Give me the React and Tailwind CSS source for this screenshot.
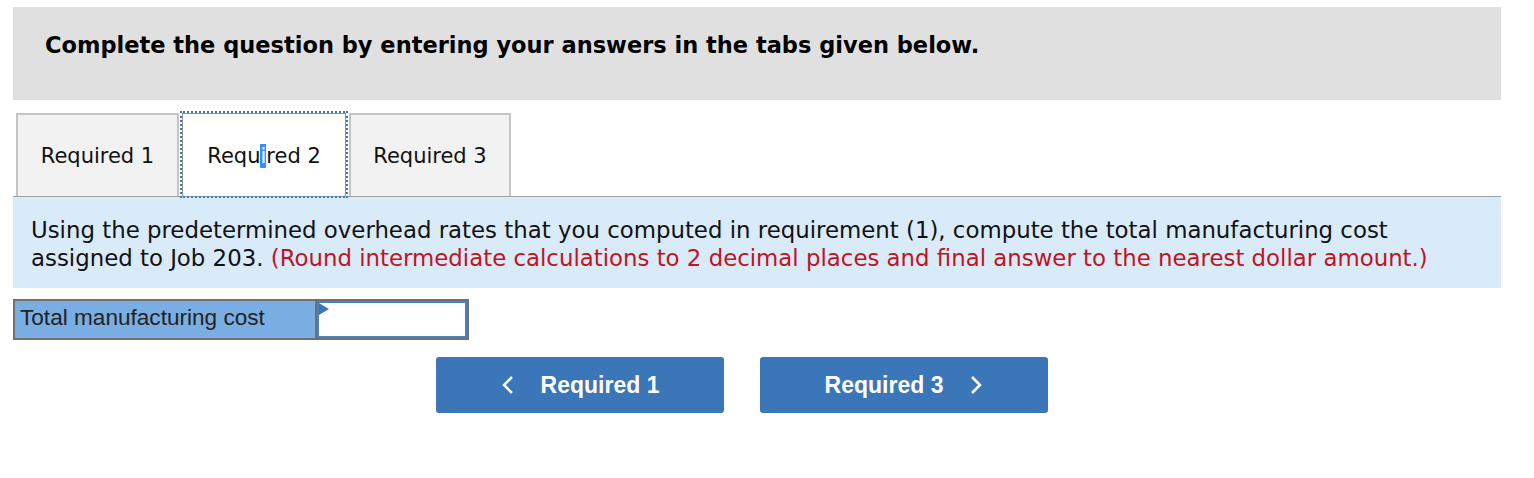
import React from "react";

const verdana = { fontFamily: '"DejaVu Sans", Verdana, sans-serif' };

export default function App() {
  return (
    <div className="w-[1534px] h-[478px] bg-white pl-[13px] pt-[7px]" style={verdana}>
      <div className="w-[1488px]">
        <div className="h-[93px] bg-[#e0e0e0] pl-[32px] pt-[24px]">
          <p className="text-[22.5px] font-bold text-black leading-[28px]">
            Complete the question by entering your answers in the tabs given below.
          </p>
        </div>

        <div className="mt-[13px] flex items-end h-[84px] border-b border-[#a0a0a0] pl-[3px]">
          <div className="w-[163px] h-[83px] pt-[3px] bg-[#f2f2f2] border-2 border-b-0 border-[#c4c4c4] flex items-center justify-center text-[21px] text-[#111]">
            Required 1
          </div>
          <div className="ml-[3px] w-[164px] h-[83px] pt-[3px] bg-white border border-b-0 border-[#909090] outline-2 outline-dotted outline-[#3a76b8] flex items-center justify-center text-[21px] text-[#111] relative">
            <span>
              Requ<span className="bg-[#3390ff] text-white">i</span>red 2
            </span>
          </div>
          <div className="ml-[3px] w-[162px] h-[83px] pt-[3px] bg-[#f2f2f2] border-2 border-b-0 border-[#c4c4c4] flex items-center justify-center text-[21px] text-[#111]">
            Required 3
          </div>
        </div>

        <div className="h-[91px] bg-[#d9ebf9] pl-[18px] pr-[22px] pt-[19px] text-[22.85px] leading-[28px] text-[#111]">
          Using the predetermined overhead rates that you computed in requirement (1), compute the total manufacturing cost assigned to Job 203.{" "}
          <span className="text-[#c0141e]">
            (Round intermediate calculations to 2 decimal places and final answer to the nearest dollar amount.)
          </span>
        </div>

        <div className="mt-[11px] flex h-[41px]">
          <div className="w-[302px] h-full pb-[3px] bg-[#7aaee3] border-2 border-[#707070] border-r-0 flex items-center pl-[5px] text-[22.6px] text-[#222] [font-family:'Liberation_Sans',Arial,sans-serif]">
            Total manufacturing cost
          </div>
          <div className="relative w-[154px] h-full border-2 border-[#707070]">
            <div className="w-full h-full border-2 border-[#4a7fc0] bg-white"></div>
            <div className="absolute left-[2px] top-[2px] w-0 h-0 border-t-[6px] border-b-[6px] border-l-[10px] border-t-transparent border-b-transparent border-l-[#3a76b8]"></div>
          </div>
        </div>

        <div className="mt-[17px] flex pl-[423px] gap-[36px] [font-family:'Liberation_Sans',Arial,sans-serif]">
          <button className="w-[288px] h-[56px] bg-[#3a76b8] rounded-[3px] flex items-center justify-center text-white text-[23px] font-bold">
            <svg width="14" height="20" viewBox="0 0 14 20" className="mr-[26px]">
              <path d="M11 2 L3 10 L11 18" fill="none" stroke="white" strokeWidth="2.5" />
            </svg>
            Required 1
          </button>
          <button className="w-[288px] h-[56px] bg-[#3a76b8] rounded-[3px] flex items-center justify-center text-white text-[23px] font-bold">
            Required 3
            <svg width="14" height="20" viewBox="0 0 14 20" className="ml-[26px]">
              <path d="M3 2 L11 10 L3 18" fill="none" stroke="white" strokeWidth="2.5" />
            </svg>
          </button>
        </div>
      </div>
    </div>
  );
}
